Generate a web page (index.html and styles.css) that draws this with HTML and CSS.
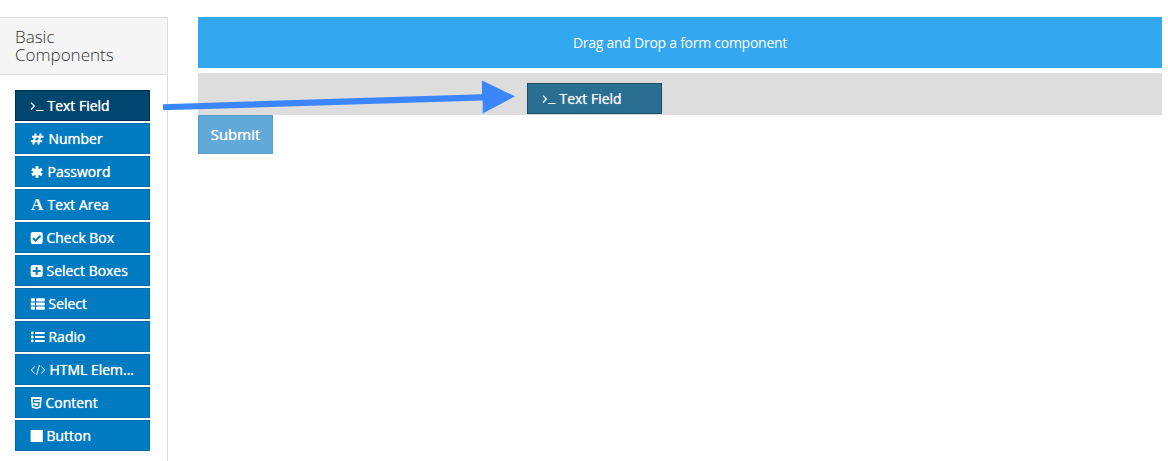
FILE: index.html
```html
<!DOCTYPE html>
<html lang="en">
<head>
<meta charset="utf-8">
<title>Form Builder</title>
<link rel="stylesheet" href="styles.css">
</head>
<body>
<div class="builder">
  <aside class="sidebar">
    <h2 class="sidebar-title">Basic Components</h2>
    <div class="component-list">
      <div class="component active"><svg class="icon" width="13" height="14" viewBox="0 0 13 14"><path class="line" d="M1 3.7 4.4 7.1 1 10.5M6 11.5H13.6"/></svg><span class="label">Text Field</span></div>
      <div class="component"><svg class="icon" width="14" height="14" viewBox="0 0 14 14"><path class="line bold" d="M5.7 1.5 3.3 12.5M10.7 1.5 8.3 12.5M2 4.8H13.5M.8 9.2H12.3"/></svg><span class="label">Number</span></div>
      <div class="component"><svg class="icon" width="13" height="14" viewBox="0 0 13 14"><path class="line heavy" d="M7 1.2V12.8M2 4.1 12 9.9M12 4.1 2 9.9"/></svg><span class="label">Password</span></div>
      <div class="component"><span class="letter-icon">A</span><span class="label">Text Area</span></div>
      <div class="component"><svg class="icon" width="12" height="14" viewBox="0 0 12 14"><rect x=".7" y="1" width="12" height="12" rx="2.2"/><path class="cut" d="M3 7 5.6 9.6 10.5 4.7"/></svg><span class="label">Check Box</span></div>
      <div class="component"><svg class="icon" width="12" height="14" viewBox="0 0 12 14"><rect x=".7" y="1" width="12" height="12" rx="2.2"/><path class="cut" d="M6.7 3V11M2.7 7H10.7"/></svg><span class="label">Select Boxes</span></div>
      <div class="component"><svg class="icon" width="14" height="14" viewBox="0 0 14 14"><rect x=".8" y="1.2" width="4.2" height="3.2" rx=".8"/><rect x="6" y="1.2" width="8.8" height="3.2" rx=".8"/><rect x=".8" y="5.4" width="4.2" height="3.2" rx=".8"/><rect x="6" y="5.4" width="8.8" height="3.2" rx=".8"/><rect x=".8" y="9.6" width="4.2" height="3.2" rx=".8"/><rect x="6" y="9.6" width="8.8" height="3.2" rx=".8"/></svg><span class="label">Select</span></div>
      <div class="component"><svg class="icon" width="14" height="14" viewBox="0 0 14 14"><path d="M5 2.1h9.7v1.9H5zM5 6.1h9.7v1.9H5zM5 10.1h9.7v1.9H5z"/><circle cx="2.2" cy="3" r="1.4"/><circle cx="2.2" cy="7" r="1.4"/><circle cx="2.2" cy="11" r="1.4"/></svg><span class="label">Radio</span></div>
      <div class="component"><svg class="icon" width="15" height="14" viewBox="0 0 15 14"><path class="line thin" d="M4.7 3.5 1.3 7 4.7 10.5M11.3 3.5 14.7 7 11.3 10.5M9.4 2 6.6 12"/></svg><span class="label">HTML Elem...</span></div>
      <div class="component"><svg class="icon" width="11" height="14" viewBox="0 0 11 14"><path d="M.8 1H11.8L10.8 11.7 6.3 13 1.8 11.7z"/><path class="cut fine" d="M9.9 3.6H3.4L3.7 6.6H9.1L8.8 9.8 6.3 10.5 3.9 9.8 3.8 8.5"/></svg><span class="label">Content</span></div>
      <div class="component"><svg class="icon" width="12" height="14" viewBox="0 0 12 14"><rect x=".6" y="1" width="12.2" height="12"/></svg><span class="label">Button</span></div>
    </div>
  </aside>
  <main class="canvas">
    <div class="banner">Drag and Drop a form component</div>
    <div class="drop-zone">
      <div class="component dragging"><svg class="icon" width="13" height="14" viewBox="0 0 13 14"><path class="line" d="M1 3.7 4.4 7.1 1 10.5M6 11.5H13.6"/></svg><span class="label">Text Field</span></div>
    </div>
    <button class="submit" type="button">Submit</button>
  </main>
  <svg class="arrow" width="356" height="40" viewBox="0 0 356 40"><path d="M3 24.2 322 14.2V.5L355 16.3 322.7 33.5V20.5L3 30.2z"/></svg>
</div>
</body>
</html>
```
FILE: styles.css
```css
* { box-sizing: border-box; }
body {
  margin: 0;
  background: #fff;
  font-family: "Open Sans", sans-serif;
  font-size: 14px;
}
.builder {
  position: relative;
  display: flex;
  align-items: stretch;
  gap: 30px;
  width: 1162px;
  height: 461px;
  padding-top: 17px;
}
.sidebar {
  width: 168px;
  flex: none;
  border-top: 1px solid #ddd;
  border-right: 1px solid #ddd;
}
.sidebar-title {
  margin: 0;
  height: 57px;
  padding: 10px 15px;
  background: #f5f5f5;
  border-bottom: 1px solid #ddd;
  color: #333;
  font-size: 17px;
  font-weight: 300;
  line-height: 18px;
}
.component-list {
  display: flex;
  flex-direction: column;
  gap: 2px;
  padding: 15px 17px 0 15px;
}
.component {
  display: flex;
  align-items: center;
  gap: 4.5px;
  width: 135px;
  height: 31px;
  padding: 0 0 0 14px;
  background: #007bc2;
  border: 1px solid #006ba9;
  color: #fff;
  line-height: 20px;
  white-space: nowrap;
}
.label {
  letter-spacing: -.02px;
  text-shadow: 0 0 .7px currentColor;
}
.active {
  background: #00476f;
  border-color: #002b44;
}
.icon {
  flex: none;
  overflow: visible;
  fill: #fff;
}
.line {
  fill: none;
  stroke: #fff;
  stroke-width: 1.2;
}
.bold { stroke-width: 2; }
.heavy { stroke-width: 3; }
.thin { stroke-width: 1; }
.cut {
  fill: none;
  stroke: #007bc2;
  stroke-width: 2;
}
.fine { stroke-width: 1.3; }
.letter-icon {
  width: 13px;
  padding-left: 1px;
  font: bold 17px/20px "Liberation Serif", serif;
}
.canvas {
  flex: 1;
}
.banner {
  height: 51px;
  background: #33a7ef;
  color: #fff;
  line-height: 51px;
  text-align: center;
  letter-spacing: -.26px;
}
.drop-zone {
  height: 42px;
  margin-top: 5px;
  padding: 10px 0 0 329px;
  background: #ddd;
}
.dragging {
  background: #2a6e92;
  border-color: #1d4b64;
  color: #f0f4f7;
}
.submit {
  display: block;
  width: 75px;
  height: 39px;
  padding: 0 0 1px;
  background: #61a9d8;
  border: 1px solid #5a9fcb;
  color: #fff;
  font-family: inherit;
  font-size: 15px;
  text-shadow: 0 0 .7px #fff;
}
.arrow {
  position: absolute;
  left: 160px;
  top: 80px;
  fill: #3b86fb;
}
```
